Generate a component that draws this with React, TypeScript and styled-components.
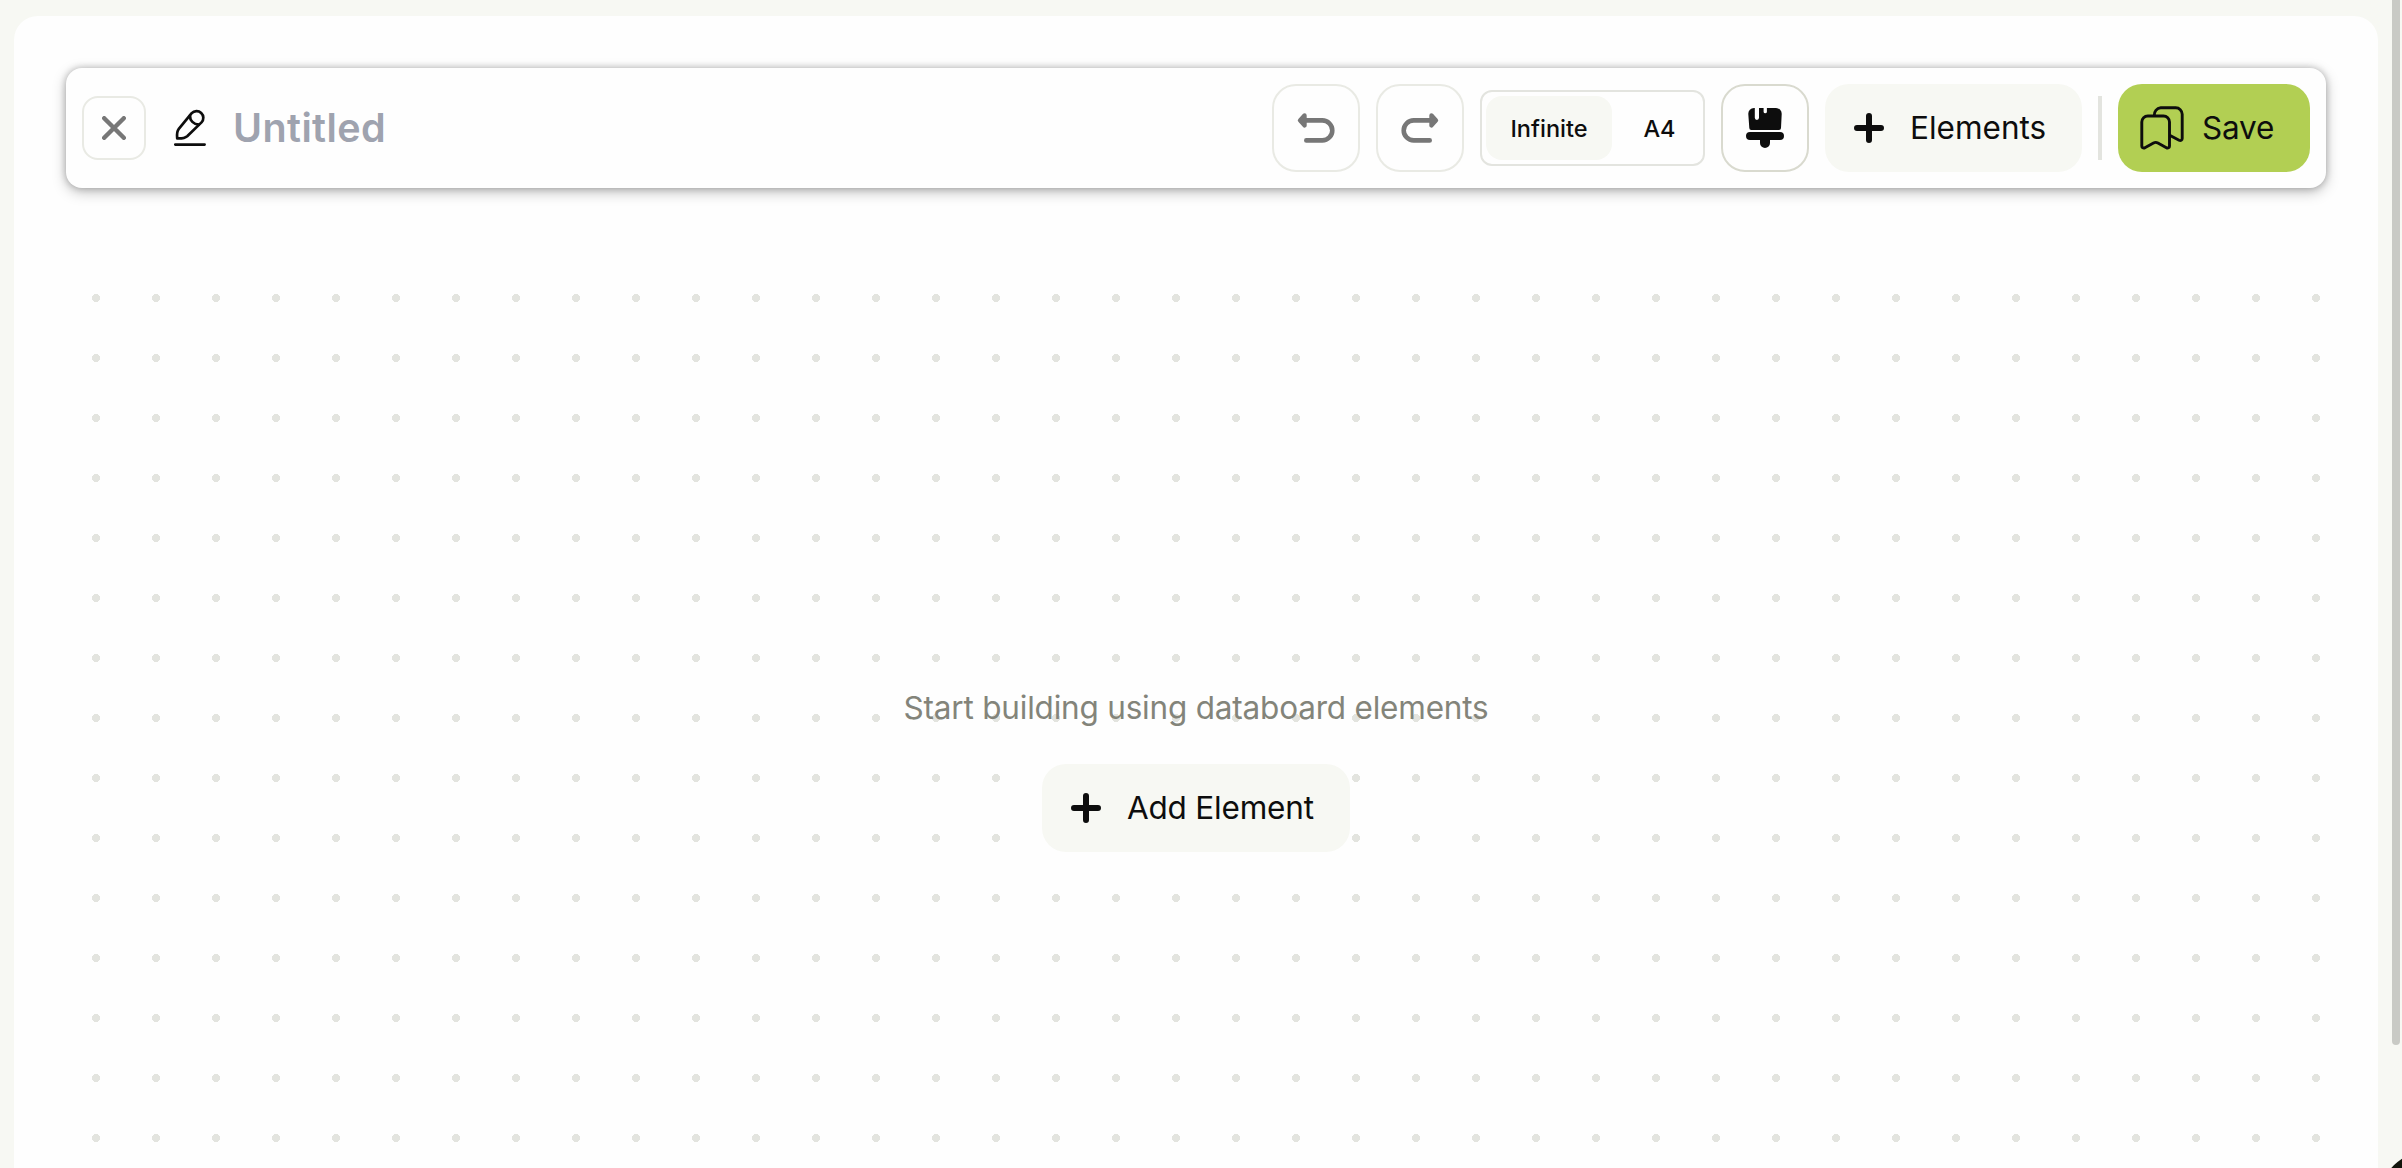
import React from "react";
import styled, { createGlobalStyle } from "styled-components";

const Global = createGlobalStyle`
  * { box-sizing: border-box; }
  html, body { margin: 0; padding: 0; overflow: hidden; background: #f7f8f3; }
  body { font-family: Inter, "Liberation Sans", sans-serif; color: #0d0d0d; }
  button { font: inherit; color: inherit; margin: 0; padding: 0; }
`;

const Page = styled.div`
  position: relative;
  width: 100vw;
  height: 100vh;
  padding: 16px 24px 0 14px;
  overflow: hidden;
  background: #f7f8f3;
`;

const Panel = styled.main`
  height: 100%;
  padding: 52px 52px 0;
  display: flex;
  flex-direction: column;
  background: #fefefe;
  border-radius: 24px 24px 0 0;
`;

const Toolbar = styled.header`
  flex: none;
  height: 120px;
  padding: 0 16px;
  display: flex;
  align-items: center;
  gap: 16px;
  background: #fefefe;
  border-radius: 16px;
  box-shadow: 0 0 7px rgba(0, 0, 0, 0.24), 0 4px 14px rgba(0, 0, 0, 0.25);
`;

const TitleGroup = styled.div`
  flex: 1;
  display: flex;
  align-items: center;
`;

const IconButton = styled.button<{ $size: number; $radius: number; $border?: string }>`
  width: ${(p) => p.$size}px;
  height: ${(p) => p.$size}px;
  display: flex;
  align-items: center;
  justify-content: center;
  border: 2px solid ${(p) => p.$border ?? "#e9eae4"};
  border-radius: ${(p) => p.$radius}px;
  background: #fefefe;
`;

const PencilSlot = styled.span`
  display: flex;
  margin-left: 24px;
`;

const Title = styled.h1`
  margin: 0 0 0 27px;
  font-size: 39.5px;
  line-height: 52px;
  font-weight: 600;
  letter-spacing: 0.4px;
  color: #9fa3af;
`;

const Segmented = styled.div`
  width: 225px;
  height: 76px;
  padding: 4px;
  display: flex;
  gap: 8px;
  border: 2px solid #e3e4df;
  border-radius: 12px;
`;

const Segment = styled.button<{ $active?: boolean; $width: number }>`
  flex: none;
  width: ${(p) => p.$width}px;
  border: 0;
  border-radius: 16px;
  background: ${(p) => (p.$active ? "#f7f8f3" : "transparent")};
  font-size: 23.5px;
  font-weight: 500;
`;

const TextButton = styled.button<{ $width: number; $green?: boolean; $pad: number; $gap: number }>`
  width: ${(p) => p.$width}px;
  height: 88px;
  padding-left: ${(p) => p.$pad}px;
  display: flex;
  align-items: center;
  gap: ${(p) => p.$gap}px;
  border: 0;
  border-radius: 24px;
  background: ${(p) => (p.$green ? "#b2cf53" : "#f7f8f3")};
`;

const Label = styled.span<{ $spacing?: number }>`
  font-size: 31.5px;
  line-height: 40px;
  white-space: nowrap;
  letter-spacing: ${(p) => p.$spacing ?? 0}px;
`;

const Divider = styled.i`
  width: 4px;
  height: 64px;
  background: #e3e4df;
`;

const Canvas = styled.section`
  flex: 1;
  margin-top: 80px;
  padding-top: 420px;
  display: flex;
  flex-direction: column;
  align-items: center;
  background-image: radial-gradient(circle, #e3e4df 4px, transparent 4px);
  background-size: 60px 60px;
`;

const Hint = styled.p`
  margin: 0 0 36px;
  font-size: 31.5px;
  line-height: 40px;
  letter-spacing: -0.2px;
  color: #83847a;
  white-space: nowrap;
`;

const ScrollThumb = styled.div`
  position: absolute;
  top: -8px;
  right: 2px;
  width: 8px;
  height: 1053px;
  border-radius: 4px;
  background: #c9cac5;
`;

const ChatBubble = styled.div`
  position: absolute;
  left: 2380px;
  top: 1151px;
  width: 96px;
  height: 96px;
  border-radius: 50%;
  background: #12140b;
`;

const Close = () => (
  <svg width="24" height="24" viewBox="0 0 24 24" fill="none" stroke="#777" strokeWidth="4.4" strokeLinecap="round">
    <path d="M2.2 2.2 21.8 21.8M21.8 2.2 2.2 21.8" />
  </svg>
);

const Pencil = () => (
  <svg width="36" height="40" viewBox="0 0 36 40" fill="none" stroke="#0d0d0d" strokeWidth="2.7" strokeLinecap="round" strokeLinejoin="round">
    <path d="M21.700 5.200a6.700 6.700 0 0 1 9.800 9.200L17.200 28.200c-2.400 2.100-5 2.400-10 2.200-.5-4.600-.4-7.200 1.600-9.600Z" />
    <path d="M20 7.700c-.2 4.800 3.600 8.700 8.800 8.900M5.300 36.600h29.300" />
  </svg>
);

const TurnArrow = ({ flip }: { flip?: boolean }) => (
  <svg width="40" height="32" viewBox="0 0 40 32" fill="none" stroke="#777" strokeWidth="4.6" strokeLinecap="round" strokeLinejoin="round">
    <g transform={flip ? "translate(40 0) scale(-1 1)" : undefined}>
      <path d="M5 8.400h21.300a10 10 0 0 1 0 20H10.300" />
      <path d="M8.500 3.400 4 8.400l4.500 5z" fill="#777" strokeWidth="4.4" />
    </g>
  </svg>
);

const Brush = () => (
  <svg width="40" height="40" viewBox="0 0 40 40" fill="#0d0d0d">
    <path d="M9 0h.8v9.800a2 2 0 0 0 4.200 0V0h4.600v3.700a1.650 1.650 0 0 0 3.300 0V0H31a5.700 5.700 0 0 1 5.700 6l-.7 14a2.100 2.100 0 0 1-2 2H6.300a2 2 0 0 1-2-2L3.300 6A5.700 5.700 0 0 1 9 0Z" />
    <path d="M5 24h30a4 4 0 0 1 0 8H25v3a5 5 0 0 1-10 0v-3H5a4 4 0 0 1 0-8Z" />
  </svg>
);

const Plus = () => (
  <svg width="30" height="30" viewBox="0 0 30 30" stroke="#0d0d0d" strokeWidth="6" strokeLinecap="round">
    <path d="M15 3v24M3 15h24" />
  </svg>
);

const Bookmarks = () => (
  <svg width="44" height="44" viewBox="0 0 44 44" fill="none" stroke="#0d0d0d" strokeWidth="2.900" strokeLinecap="round" strokeLinejoin="round">
    <path d="M1.800 16a6 6 0 0 1 6-6h15.700a6 6 0 0 1 6 6v23.900c0 1.800-1.600 2.700-3.100 1.800l-8.500-4.700a4.600 4.600 0 0 0-4.400 0l-8.600 4.700c-1.500.9-3.100 0-3.100-1.800Z" />
    <path d="M14.300 9.500a7 7 0 0 1 6.400-7.700h15a6.500 6.500 0 0 1 6.500 6.500v24.200c0 1.700-1.500 2.600-3.100 1.800l-8.500-4.500" />
  </svg>
);

export default function App() {
  return (
    <Page>
      <Global />
      <Panel>
        <Toolbar>
          <TitleGroup>
            <IconButton $size={64} $radius={16} aria-label="Close"><Close /></IconButton>
            <PencilSlot><Pencil /></PencilSlot>
            <Title>Untitled</Title>
          </TitleGroup>
          <IconButton $size={88} $radius={24} aria-label="Undo"><TurnArrow /></IconButton>
          <IconButton $size={88} $radius={24} aria-label="Redo"><TurnArrow flip /></IconButton>
          <Segmented>
            <Segment $active $width={126}>Infinite</Segment>
            <Segment $width={79}>A4</Segment>
          </Segmented>
          <IconButton $size={88} $radius={24} $border="#d9dacf" aria-label="Theme"><Brush /></IconButton>
          <TextButton $width={257} $pad={29} $gap={26}><Plus /><Label>Elements</Label></TextButton>
          <Divider />
          <TextButton $width={192} $pad={22} $gap={18} $green><Bookmarks /><Label $spacing={-0.2}>Save</Label></TextButton>
        </Toolbar>
        <Canvas>
          <Hint>Start building using databoard elements</Hint>
          <TextButton $width={308} $pad={29} $gap={26}><Plus /><Label $spacing={-0.2}>Add Element</Label></TextButton>
        </Canvas>
      </Panel>
      <ScrollThumb />
      <ChatBubble />
    </Page>
  );
}
